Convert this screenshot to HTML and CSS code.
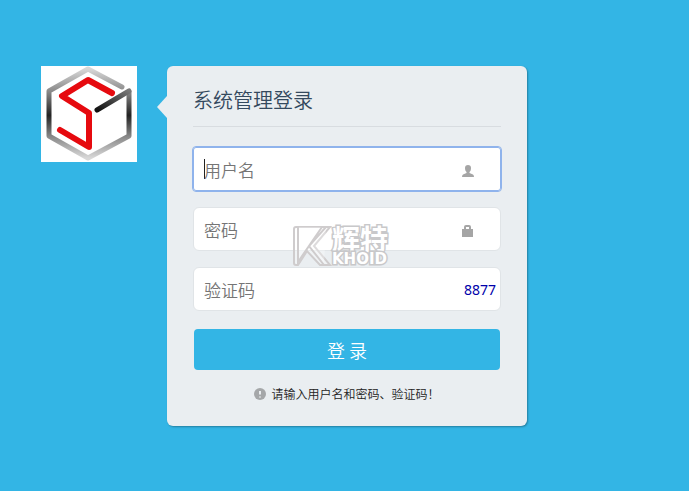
FILE: index.html
```html
<!DOCTYPE html>
<html lang="zh-CN">

<head>
    <title>系统管理登录</title>
    <meta charset="UTF-8">
    <meta name="viewport" content="width=device-width, initial-scale=1">
    <link rel="stylesheet" href="styles.css">
</head>

<body>
    <main class="login">
        <svg class="logo" viewBox="0 0 96 96" aria-hidden="true">
            <defs>
                <linearGradient id="steel" x1="0" y1="0" x2="0" y2="1">
                    <stop offset="0" stop-color="#d8d8d8" />
                    <stop offset=".25" stop-color="#8a8a8a" />
                    <stop offset=".52" stop-color="#222" />
                    <stop offset=".76" stop-color="#888" />
                    <stop offset="1" stop-color="#d8d8d8" />
                </linearGradient>
                <linearGradient id="bar" x1="0" y1="1" x2="1" y2="0">
                    <stop offset="0" stop-color="#111" />
                    <stop offset="1" stop-color="#777" />
                </linearGradient>
            </defs>
            <rect width="96" height="96" fill="#fff" />
            <g fill="none" stroke-width="5" stroke-linejoin="round" stroke-linecap="round">
                <path stroke="url(#steel)" d="M81 21 47 3 8 25V70L47 92 88 70V26" />
                <path stroke="url(#bar)" d="M56 44 88 25" />
                <path stroke="#e60a0f" stroke-width="6" d="M71 27 47 14 21 30 48 47V81L19 64" />
            </g>
        </svg>

        <form class="card">
            <h1 class="title">系统管理登录</h1>
            <div class="field">
                <input class="text is-active" type="text" name="user" placeholder="用户名" aria-label="用户名">
                <svg class="icon" viewBox="0 0 12 12" aria-hidden="true">
                    <path d="M6 0C4 0 3 1 3 3c0 2 .5 3 1.500 4v1L1 9.500Q0 10 0 12h12q0-2-1-2.500L7.500 8V7C8.500 6 9 5 9 3c0-2-1-3-3-3z" />
                </svg>
            </div>
            <div class="field">
                <input class="text" type="password" name="password" placeholder="密码" aria-label="密码">
                <svg class="icon" viewBox="0 0 12 12" aria-hidden="true">
                    <path d="M0 4h2V2q0-2 2-2h3q2 0 2 2v2h2v8H0zm4 0h3V2H4z" />
                </svg>
                <svg class="watermark" viewBox="0 0 96 42" aria-hidden="true">
                    <path class="mark" d="M3 1H37L21 20 37 39H27L14 25 5 39H3Q1 39 1 37V3Q1 1 3 1z" />
                    <path class="mark" d="M5 1V36L29 1M33 1 16 20 31 39" />
                    <text class="mark-cn" x="39" y="24">辉特</text>
                    <text class="mark-en" x="39" y="38">KHOID</text>
                </svg>
            </div>
            <div class="field">
                <input class="text" type="text" name="code" placeholder="验证码" aria-label="验证码">
                <a class="code" href="#">8877</a>
            </div>
            <button class="submit" type="submit">登 录</button>
            <p class="note">
                <svg class="note-icon" viewBox="0 0 12 12" aria-hidden="true">
                    <circle cx="6" cy="6" r="6" fill="#a5a7a9" />
                    <path d="M6 3v3.500M6 8.500v1" stroke="#eaedf0" stroke-width="2" />
                </svg>
                请输入用户名和密码、验证码！
            </p>
        </form>
    </main>
</body>

</html>
```
FILE: styles.css
```css
body {
    margin: 0;
    background-color: #33b5e5;
    font-family: "Noto Sans CJK SC", sans-serif;
}

.login {
    display: flex;
    align-items: flex-start;
    gap: 30px;
    max-width: 486px;
    padding: 66px 41px;
}

.logo {
    flex: none;
    width: 96px;
    height: 96px;
}

.card {
    position: relative;
    flex: 1;
    box-sizing: border-box;
    padding: 20px 26px 24px;
    border-radius: 6px;
    background-color: #eaeef1;
    box-shadow: 1px 1px 2px rgba(0, 0, 0, .3);
}

/* arrow pointing at the logo */
.card::before {
    content: "";
    position: absolute;
    top: 30px;
    left: -10px;
    border: 11px solid transparent;
    border-left: 0;
    border-right: 10px solid #eaeef1;
}

.title {
    margin: 0 0 20px;
    border-bottom: 1px solid #d8dce0;
    color: #34495e;
    font-size: 20px;
    font-weight: 350;
    line-height: 28px;
    padding: 0 0 12px;
}

.field {
    position: relative;
    margin-bottom: 16px;
}

.text {
    display: block;
    box-sizing: border-box;
    width: 100%;
    height: 44px;
    padding: 0 50px 0 10px;
    border: 1px solid #e0e4e7;
    border-radius: 6px;
    background-color: #fff;
    font-family: inherit;
    font-size: 17px;
    font-weight: 350;
}

.text::placeholder {
    color: #757575;
    opacity: 1;
}

.text.is-active {
    border-color: #8fb3ec;
    border-radius: 3px;
    outline: 1px solid #8fb3ec;
    background: linear-gradient(#222, #222) 10px center / 1px 20px no-repeat #fff;
}

.icon {
    position: absolute;
    top: 18px;
    right: 27px;
    width: 12px;
    height: 12px;
    fill: #a5a5a5;
}

.code {
    position: absolute;
    top: 14px;
    right: 5px;
    color: #00a;
    font-family: "Noto Sans", sans-serif;
    font-size: 14px;
    line-height: 18px;
    text-decoration: none;
}

.submit {
    display: block;
    width: calc(100% - 2px);
    height: 41px;
    margin: 18px 1px 16px;
    padding: 0;
    border: 0;
    border-radius: 4px;
    background-color: #33b5e5;
    color: #fff;
    font-family: inherit;
    font-size: 18px;
    font-weight: 350;
}

.note {
    display: flex;
    align-items: center;
    justify-content: center;
    gap: 5px;
    margin: 0;
    color: #222;
    font-size: 12px;
    font-weight: 350;
    line-height: 16px;
}

.note-icon {
    width: 12px;
    height: 12px;
}

.watermark {
    position: absolute;
    top: 19px;
    left: 100px;
    width: 96px;
    height: 42px;
    overflow: visible;
    pointer-events: none;
}

.mark {
    fill: rgba(255, 255, 255, .3);
    stroke: #cfcccd;
    stroke-width: 2;
}

.mark-cn,
.mark-en {
    fill: #fff;
    stroke: #c8c8ca;
    stroke-width: 3;
    paint-order: stroke;
    font-weight: 700;
}

.mark-cn {
    font-size: 28px;
}

.mark-en {
    font-family: "DejaVu Sans", sans-serif;
    font-size: 15px;
}
```
